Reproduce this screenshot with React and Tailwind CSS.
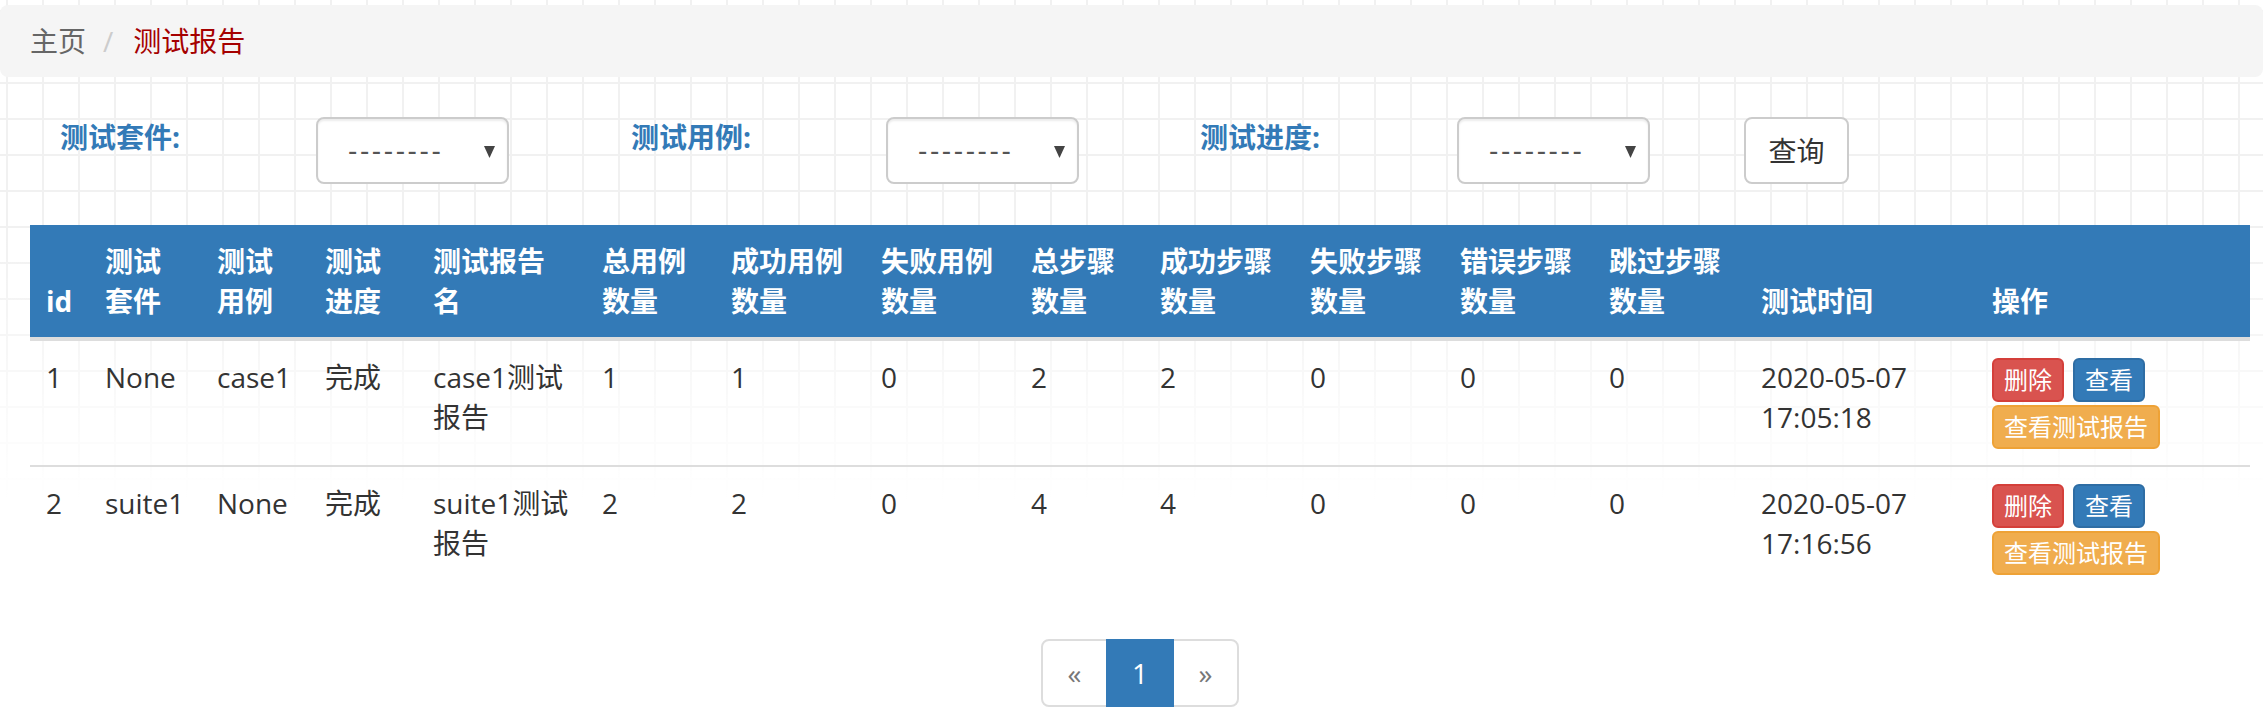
import React from "react";

const cols = [59, 112, 108, 108, 169, 129, 150, 150, 129, 150, 150, 149, 152, 231, 274];
const colCls = [
  "w-[59px]", "w-[112px]", "w-[108px]", "w-[108px]", "w-[169px]", "w-[129px]", "w-[150px]",
  "w-[150px]", "w-[129px]", "w-[150px]", "w-[150px]", "w-[149px]", "w-[152px]", "w-[231px]", "w-[274px]",
];

const headers = [
  "id", "测试套件", "测试用例", "测试进度", "测试报告名", "总用例数量", "成功用例数量",
  "失败用例数量", "总步骤数量", "成功步骤数量", "失败步骤数量", "错误步骤数量", "跳过步骤数量",
  "测试时间", "操作",
];

const rows = [
  { id: "1", suite: "None", cas: "case1", prog: "完成", name: ["case1测试", "报告"], n: ["1", "1", "0", "2", "2", "0", "0", "0"], date: "2020-05-07", time: "17:05:18" },
  { id: "2", suite: "suite1", cas: "None", prog: "完成", name: ["suite1测试", "报告"], n: ["2", "2", "0", "4", "4", "0", "0", "0"], date: "2020-05-07", time: "17:16:56" },
];

function FakeSelect() {
  return (
    <div className="relative w-[193px] h-[67px] shrink-0 bg-white border-2 border-[#ccc] rounded-[8px] shadow-[inset_0_2px_2px_rgba(0,0,0,0.075)]">
      <div className="absolute left-[30px] top-[12px] text-[28px] leading-[40px] text-[#555] tracking-[2.6px] font-['Liberation_Sans',sans-serif]">
        --------
      </div>
      <svg className="absolute right-[12px] top-[27px]" width="11" height="12" viewBox="0 0 11 12">
        <path d="M0 0 L11 0 L5.5 12 Z" fill="#444" />
      </svg>
    </div>
  );
}

function Btn({ cls, children }) {
  return (
    <span className={"inline-block text-[24px] leading-[36px] px-[10px] py-[2px] border-2 rounded-[6px] text-white whitespace-nowrap " + cls}>
      {children}
    </span>
  );
}

export default function App() {
  return (
    <div className="min-h-[718px] w-full pt-[5px] font-['Open_Sans','Noto_Sans_CJK_SC',sans-serif] text-[#333] [background-image:linear-gradient(to_bottom,rgba(255,255,255,0)_230px,#fff_500px),linear-gradient(to_right,#f1f1f1_2px,transparent_2px),linear-gradient(to_bottom,#f1f1f1_2px,transparent_2px)] [background-size:100%_100%,36px_36px,36px_36px] [background-position:0_0,6px_10px,6px_10px] bg-white">
      {/* breadcrumb */}
      <div className="h-[72px] w-full bg-[#f5f5f5] rounded-[8px] flex items-center pl-[30px] text-[28px] leading-[40px]">
        <span className="text-[#666]">主页</span>
        <span className="text-[#ccc] ml-[17px]">/</span>
        <span className="text-[#a50000] ml-[20px]">测试报告</span>
      </div>

      {/* filter form */}
      <div className="mt-[40px] flex items-start pl-[60px] text-[28px] leading-[40px]">
        <div className="w-[256px] shrink-0 font-bold text-[#337ab7]">测试套件:</div>
        <FakeSelect />
        <div className="ml-[122px] w-[255px] shrink-0 font-bold text-[#337ab7]">测试用例:</div>
        <FakeSelect />
        <div className="ml-[121px] w-[257px] shrink-0 font-bold text-[#337ab7]">测试进度:</div>
        <FakeSelect />
        <div className="ml-[94px] w-[105px] h-[67px] shrink-0 bg-white border-2 border-[#ccc] rounded-[8px] flex items-center justify-center text-[#333]">
          查询
        </div>
      </div>

      {/* table */}
      <div className="mt-[41px] pl-[30px] pr-[13px]">
        <table className="w-[2220px] table-fixed border-collapse text-[28px] leading-[40px]">
          <colgroup>
            {cols.map((c, i) => (
              <col key={i} className={colCls[i]} />
            ))}
          </colgroup>
          <thead>
            <tr className="bg-[#337ab7]">
              {headers.map((h) => (
                <th key={h} className="p-[16px] align-bottom text-left font-bold text-white border-b-4 border-[#ddd]">
                  {h}
                </th>
              ))}
            </tr>
          </thead>
          <tbody>
            {rows.map((r, ri) => (
              <tr key={r.id} className={ri > 0 ? "border-t-2 border-[#ddd]" : ""}>
                <td className="p-[16px] align-top">{r.id}</td>
                <td className="p-[16px] align-top">{r.suite}</td>
                <td className="p-[16px] align-top">{r.cas}</td>
                <td className="p-[16px] align-top">{r.prog}</td>
                <td className="p-[16px] align-top">
                  {r.name[0]}
                  <br />
                  {r.name[1]}
                </td>
                {r.n.map((v, i) => (
                  <td key={i} className="p-[16px] align-top">{v}</td>
                ))}
                <td className="p-[16px] align-top">
                  {r.date}
                  <br />
                  {r.time}
                </td>
                <td className="p-[16px] align-top">
                  <div className="flex flex-wrap gap-x-[9px] gap-y-[3px] pt-[1px] w-[200px]">
                    <Btn cls="bg-[#d9534f] border-[#d43f3a]">删除</Btn>
                    <Btn cls="bg-[#337ab7] border-[#2e6da4]">查看</Btn>
                    <Btn cls="bg-[#f0ad4e] border-[#eea236]">查看测试报告</Btn>
                  </div>
                </td>
              </tr>
            ))}
          </tbody>
        </table>

        {/* pagination */}
        <div className="mt-[48px] flex justify-center">
          <div className="flex text-[28px] leading-[40px]">
            <span className="w-[67px] h-[68px] flex items-center justify-center border-2 border-[#ddd] rounded-l-[8px] bg-white text-[#777]">«</span>
            <span className="relative z-10 w-[68px] h-[68px] -ml-[2px] flex items-center justify-center border-2 border-[#337ab7] bg-[#337ab7] text-white">1</span>
            <span className="w-[67px] h-[68px] -ml-[2px] flex items-center justify-center border-2 border-[#ddd] rounded-r-[8px] bg-white text-[#777]">»</span>
          </div>
        </div>
      </div>
    </div>
  );
}
